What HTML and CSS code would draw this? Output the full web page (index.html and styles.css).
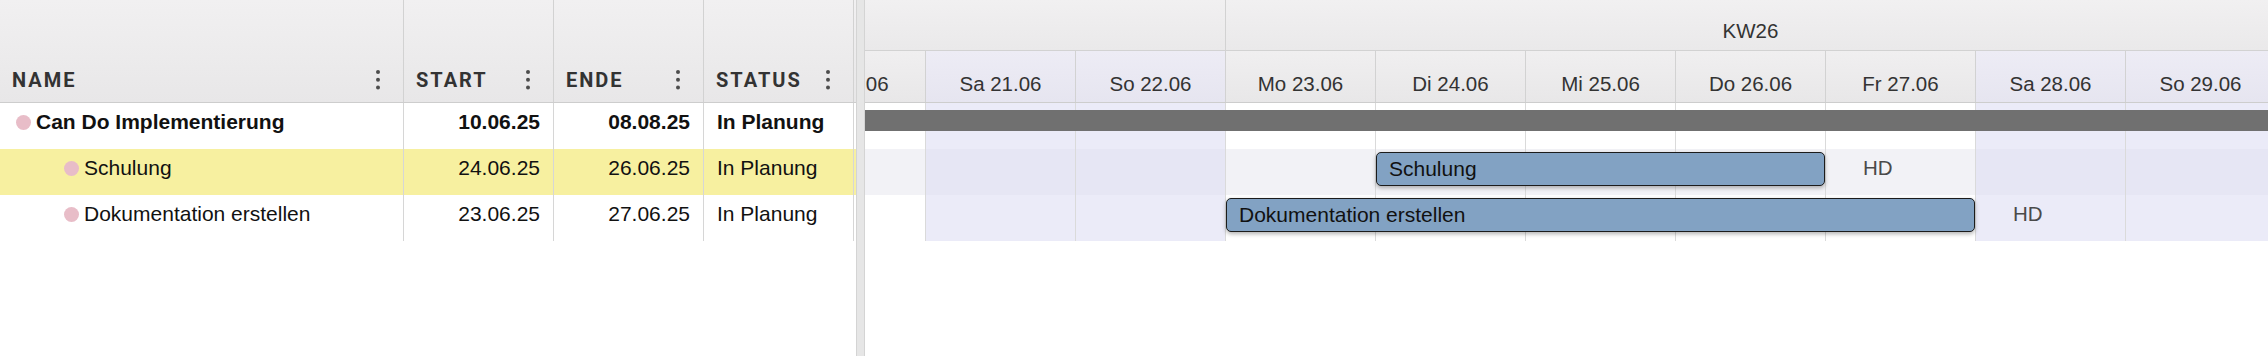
FILE: index.html
```html
<!DOCTYPE html>
<html lang="de">
<head>
  <meta charset="UTF-8">
  <title>Projektplan</title>
  <link rel="stylesheet" href="styles.css">
</head>
<body>
<div class="app">
  <!-- linke Tabelle -->
  <div class="grid">
    <div class="grid-head">
      <div class="hcell col-name"><span>NAME</span><svg class="kebab" viewBox="0 0 4 20"><circle cx="2" cy="2" r="2"/><circle cx="2" cy="9.75" r="2"/><circle cx="2" cy="17.5" r="2"/></svg></div>
      <div class="hcell col-date"><span>START</span><svg class="kebab" viewBox="0 0 4 20"><circle cx="2" cy="2" r="2"/><circle cx="2" cy="9.75" r="2"/><circle cx="2" cy="17.5" r="2"/></svg></div>
      <div class="hcell col-date"><span>ENDE</span><svg class="kebab" viewBox="0 0 4 20"><circle cx="2" cy="2" r="2"/><circle cx="2" cy="9.75" r="2"/><circle cx="2" cy="17.5" r="2"/></svg></div>
      <div class="hcell col-status"><span>STATUS</span><svg class="kebab" viewBox="0 0 4 20"><circle cx="2" cy="2" r="2"/><circle cx="2" cy="9.75" r="2"/><circle cx="2" cy="17.5" r="2"/></svg></div>
      <div class="hcell fill"></div>
    </div>

    <div class="grid-row root">
      <div class="cell col-name"><i class="dot"></i>Can Do Implementierung</div>
      <div class="cell col-date">10.06.25</div>
      <div class="cell col-date">08.08.25</div>
      <div class="cell col-status">In Planung</div>
      <div class="cell fill"></div>
    </div>
    <div class="grid-row sel">
      <div class="cell col-name child"><i class="dot"></i>Schulung</div>
      <div class="cell col-date">24.06.25</div>
      <div class="cell col-date">26.06.25</div>
      <div class="cell col-status">In Planung</div>
      <div class="cell fill"></div>
    </div>
    <div class="grid-row">
      <div class="cell col-name child"><i class="dot"></i>Dokumentation erstellen</div>
      <div class="cell col-date">23.06.25</div>
      <div class="cell col-date">27.06.25</div>
      <div class="cell col-status">In Planung</div>
      <div class="cell fill"></div>
    </div>
  </div>

  <div class="splitter"></div>

  <!-- Gantt -->
  <div class="gantt">
    <div class="timeline">
      <div class="tl-weeks">
        <div class="week w25"></div>
        <div class="week w26">KW26</div>
      </div>
      <div class="tl-days">
        <div class="day-h">Fr 20.06</div>
        <div class="day-h we">Sa 21.06</div>
        <div class="day-h we">So 22.06</div>
        <div class="day-h">Mo 23.06</div>
        <div class="day-h">Di 24.06</div>
        <div class="day-h">Mi 25.06</div>
        <div class="day-h">Do 26.06</div>
        <div class="day-h">Fr 27.06</div>
        <div class="day-h we">Sa 28.06</div>
        <div class="day-h we">So 29.06</div>
      </div>

      <div class="tl-body">
        <div class="tl-cols">
          <div class="tl-col"></div>
          <div class="tl-col we"></div>
          <div class="tl-col we"></div>
          <div class="tl-col"></div>
          <div class="tl-col"></div>
          <div class="tl-col"></div>
          <div class="tl-col"></div>
          <div class="tl-col"></div>
          <div class="tl-col we"></div>
          <div class="tl-col we"></div>
        </div>

        <div class="tl-row">
          <div class="bar bar-summary"></div>
        </div>
        <div class="tl-row sel">
          <div class="bar bar-task schulung">Schulung</div>
          <div class="hd fr27">HD</div>
        </div>
        <div class="tl-row">
          <div class="bar bar-task doku">Dokumentation erstellen</div>
          <div class="hd sa28">HD</div>
        </div>
      </div>
    </div>
  </div>
</div>
</body>
</html>
```

FILE: styles.css
```css
* {
  margin: 0;
  padding: 0;
  box-sizing: border-box;
}

body {
  font-family: "Liberation Sans", Arial, sans-serif;
  color: #111;
  background: #fff;
}

.app {
  display: flex;
  height: 356px;
}

/* linke Tabelle */
.grid {
  width: 856px;
  flex: none;
}

.grid-head {
  display: flex;
  height: 103px;
  background: linear-gradient(#f1f0f1, #e8e7e8);
  border-bottom: 1px solid #cdcdcd;
}

.hcell {
  display: flex;
  align-items: flex-end;
  justify-content: space-between;
  padding: 0 23px 10px 12px;
  border-right: 1px solid #d2d2d2;
  font-family: Roboto, "Liberation Sans", sans-serif;
  font-weight: 700;
  font-size: 20px;
  line-height: 24px;
  letter-spacing: 2px;
  color: #333;
}

.kebab {
  width: 4px;
  height: 20px;
  margin-bottom: 2px;
  fill: #4d4d4d;
}

.col-name {
  width: 404px;
}

.col-date,
.col-status {
  width: 150px;
}

.fill {
  flex: 1;
  border-right: none;
  padding: 0;
}

.grid-row {
  display: flex;
  height: 46px;
  font-size: 21px;
}

.grid-row.root {
  font-weight: 700;
}

.grid-row.sel {
  background: #f7f0a0;
}

.cell {
  display: flex;
  align-items: center;
  padding-bottom: 8px;
  border-right: 1px solid #d6d6d6;
  line-height: 24px;
  white-space: nowrap;
}

.cell.col-name {
  padding-left: 16px;
}

.cell.col-name.child {
  padding-left: 64px;
}

.cell.col-date {
  justify-content: flex-end;
  padding-right: 13px;
}

.cell.col-status {
  padding-left: 13px;
}

.cell.fill {
  border-right: none;
}

.dot {
  width: 15px;
  height: 15px;
  border-radius: 50%;
  background: #e8bdc8;
  margin-right: 5px;
  flex: none;
}

.splitter {
  width: 9px;
  flex: none;
  background: #e6e6e6;
  border-left: 1px solid #d4d4d4;
  border-right: 1px solid #d4d4d4;
}

/* Gantt */
.gantt {
  flex: 1;
  min-width: 0;
  overflow: hidden;
}

.timeline {
  width: 1500px;
  margin-left: -89px;
}

.tl-weeks {
  display: flex;
  height: 51px;
  border-bottom: 1px solid #d2d2d2;
  background: linear-gradient(#f1f0f1, #eae9ea);
}

.week {
  display: flex;
  align-items: center;
  justify-content: center;
  padding-top: 12px;
  border-right: 1px solid #d2d2d2;
  font-size: 20.5px;
  color: #333;
}

.week.w25 {
  width: 450px;
}

.week.w26 {
  width: 1050px;
}

.tl-days {
  display: flex;
  height: 52px;
  border-bottom: 1px solid #cdcdcd;
  background: linear-gradient(#f0eff0, #e8e7e8);
}

.day-h {
  width: 150px;
  flex: none;
  display: flex;
  align-items: center;
  justify-content: center;
  padding-top: 14px;
  border-right: 1px solid #d2d2d2;
  font-size: 20.5px;
  color: #333;
  white-space: nowrap;
}

.day-h.we {
  background: linear-gradient(#edecf5, #e6e5f0);
}

.tl-body {
  position: relative;
}

.tl-cols {
  position: absolute;
  top: 0;
  left: 0;
  right: 0;
  bottom: 0;
  display: flex;
  z-index: 1;
}

.tl-col {
  width: 150px;
  flex: none;
  border-right: 1px solid #dadada;
}

.tl-col.we {
  background: rgba(222, 222, 244, 0.6);
}

.tl-row {
  display: grid;
  grid-template-columns: repeat(10, 150px);
  grid-template-rows: 46px;
}

.tl-row.sel {
  background: #f2f2f6;
}

.bar {
  position: relative;
  z-index: 2;
  grid-row: 1;
  align-self: start;
}

.bar-summary {
  grid-column: 1 / -1;
  height: 21px;
  margin-top: 7px;
  background: #707070;
}

.bar-task {
  height: 34px;
  margin-top: 3px;
  margin-right: 1px;
  padding-left: 12px;
  display: flex;
  align-items: center;
  background: #82a2c3;
  border: 1px solid #1c1c1c;
  border-radius: 5px;
  box-shadow: 0 2px 4px rgba(0, 0, 0, 0.3);
  font-size: 21px;
  line-height: 24px;
  white-space: nowrap;
}

.bar-task.schulung {
  grid-column: 5 / 8;
}

.bar-task.doku {
  grid-column: 4 / 9;
}

.hd {
  position: relative;
  z-index: 2;
  grid-row: 1;
  display: flex;
  align-items: center;
  padding: 0 0 8px 37px;
  font-size: 20.5px;
  line-height: 24px;
  color: #4a4a4a;
}

.hd.fr27 {
  grid-column: 8;
}

.hd.sa28 {
  grid-column: 9;
}
```
